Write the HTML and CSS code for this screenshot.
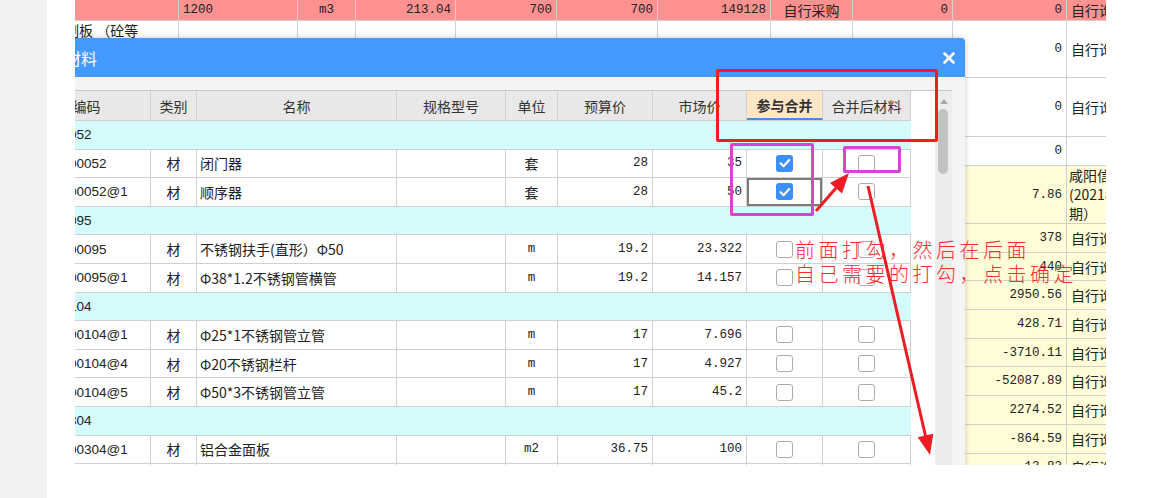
FILE: index.html
```html
<!DOCTYPE html>
<html lang="zh-CN">
<head>
    <meta charset="UTF-8">
    <meta name="viewport" content="width=device-width, initial-scale=1.0">
    <title>合并材料</title>
    <link rel="stylesheet" href="styles.css">
</head>
<body>
    <div class="side"></div>
    <div class="main">
        <div class="view">
            <!-- 底下的材料表 -->
            <div class="sheet">
                <div class="srow r1 pink">
                    <div></div>
                    <div class="mono">1200</div>
                    <div class="mid mono">m3</div>
                    <div class="num mono">213.04</div>
                    <div class="num mono">700</div>
                    <div class="num mono">700</div>
                    <div class="num mono">149128</div>
                    <div class="mid">自行采购</div>
                    <div class="num mono">0</div>
                    <div class="num mono">0</div>
                    <div>自行询价</div>
                </div>
                <div class="srow r2">
                    <div class="wrap">预制板 （砼等<br>级C30，石子<br>20mm）</div>
                    <div></div><div></div><div></div><div></div>
                    <div></div><div></div><div></div><div></div>
                    <div class="num mono">0</div>
                    <div>自行询价</div>
                </div>
                <div class="srow r3">
                    <div class="cover"></div>
                    <div class="num mono">0</div>
                    <div>自行询价</div>
                </div>
                <div class="srow r4">
                    <div class="cover"></div>
                    <div class="num mono">0</div>
                    <div></div>
                </div>
                <div class="srow r5 yel">
                    <div class="cover"></div>
                    <div class="num mono">7.86</div>
                    <div class="wrap">咸阳信息价<br>(2021年第<br>期）</div>
                </div>
                <div class="srow yel"><div class="cover"></div><div class="num mono">378</div><div>自行询价</div></div>
                <div class="srow yel"><div class="cover"></div><div class="num mono">440</div><div>自行询价</div></div>
                <div class="srow yel"><div class="cover"></div><div class="num mono">2950.56</div><div>自行询价</div></div>
                <div class="srow yel"><div class="cover"></div><div class="num mono">428.71</div><div>自行询价</div></div>
                <div class="srow yel"><div class="cover"></div><div class="num mono">-3710.11</div><div>自行询价</div></div>
                <div class="srow yel"><div class="cover"></div><div class="num mono">-52087.89</div><div>自行询价</div></div>
                <div class="srow yel"><div class="cover"></div><div class="num mono">2274.52</div><div>自行询价</div></div>
                <div class="srow yel"><div class="cover"></div><div class="num mono">-864.59</div><div>自行询价</div></div>
                <div class="srow yel"><div class="cover"></div><div class="num mono">13.83</div><div>自行询价</div></div>
            </div>

            <!-- 合并材料弹窗 -->
            <div class="dialog">
                <div class="dlg-title">
                    <span>合并材料</span>
                    <svg class="close" width="12" height="12" viewBox="0 0 12 12">
                        <path d="M1.5 1.5L10.5 10.5M10.5 1.5L1.5 10.5" stroke="#fff" stroke-width="2.6" stroke-linecap="round"/>
                    </svg>
                </div>
                <div class="dlg-body">
                    <div class="grid-box">
                        <div class="grid">
                            <div class="row head">
                                <div>编码</div><div>类别</div><div>名称</div><div>规格型号</div><div>单位</div>
                                <div>预算价</div><div>市场价</div><div class="on">参与合并</div><div>合并后材料</div>
                            </div>

                            <div class="row group"><div class="code">052</div></div>
                            <div class="row">
                                <div class="code">00052</div><div class="mid">材</div><div class="name">闭门器</div><div></div>
                                <div class="mid">套</div><div class="num mono">28</div><div class="num mono">35</div>
                                <div class="mid"><span class="ck on"><svg width="16" height="16" viewBox="0 0 16 16"><path d="M3.6 8.2l3 3 5.6-6.2" fill="none" stroke="#fff" stroke-width="2.2" stroke-linecap="round" stroke-linejoin="round"/></svg></span></div>
                                <div class="mid"><span class="ck"></span></div>
                            </div>
                            <div class="row">
                                <div class="code">00052@1</div><div class="mid">材</div><div class="name">顺序器</div><div></div>
                                <div class="mid">套</div><div class="num mono">28</div><div class="num mono">50</div>
                                <div class="mid focus"><span class="ck on"><svg width="16" height="16" viewBox="0 0 16 16"><path d="M3.6 8.2l3 3 5.6-6.2" fill="none" stroke="#fff" stroke-width="2.2" stroke-linecap="round" stroke-linejoin="round"/></svg></span></div>
                                <div class="mid"><span class="ck"></span></div>
                            </div>

                            <div class="row group"><div class="code">095</div></div>
                            <div class="row">
                                <div class="code">00095</div><div class="mid">材</div><div class="name">不锈钢扶手(直形）Φ50</div><div></div>
                                <div class="mid mono">m</div><div class="num mono">19.2</div><div class="num mono">23.322</div>
                                <div class="mid"><span class="ck"></span></div><div class="mid"><span class="ck"></span></div>
                            </div>
                            <div class="row">
                                <div class="code">00095@1</div><div class="mid">材</div><div class="name">Φ38*1.2不锈钢管横管</div><div></div>
                                <div class="mid mono">m</div><div class="num mono">19.2</div><div class="num mono">14.157</div>
                                <div class="mid"><span class="ck"></span></div><div class="mid"><span class="ck"></span></div>
                            </div>

                            <div class="row group"><div class="code">104</div></div>
                            <div class="row">
                                <div class="code">00104@1</div><div class="mid">材</div><div class="name">Φ25*1不锈钢管立管</div><div></div>
                                <div class="mid mono">m</div><div class="num mono">17</div><div class="num mono">7.696</div>
                                <div class="mid"><span class="ck"></span></div><div class="mid"><span class="ck"></span></div>
                            </div>
                            <div class="row">
                                <div class="code">00104@4</div><div class="mid">材</div><div class="name">Φ20不锈钢栏杆</div><div></div>
                                <div class="mid mono">m</div><div class="num mono">17</div><div class="num mono">4.927</div>
                                <div class="mid"><span class="ck"></span></div><div class="mid"><span class="ck"></span></div>
                            </div>
                            <div class="row">
                                <div class="code">00104@5</div><div class="mid">材</div><div class="name">Φ50*3不锈钢管立管</div><div></div>
                                <div class="mid mono">m</div><div class="num mono">17</div><div class="num mono">45.2</div>
                                <div class="mid"><span class="ck"></span></div><div class="mid"><span class="ck"></span></div>
                            </div>

                            <div class="row group"><div class="code">304</div></div>
                            <div class="row">
                                <div class="code">00304@1</div><div class="mid">材</div><div class="name">铝合金面板</div><div></div>
                                <div class="mid mono">m2</div><div class="num mono">36.75</div><div class="num mono">100</div>
                                <div class="mid"><span class="ck"></span></div><div class="mid"><span class="ck"></span></div>
                            </div>
                            <div class="row">
                                <div class="code">00304@2</div><div class="mid">材</div><div class="name">铝合金面板</div><div></div>
                                <div class="mid mono">m2</div><div class="num mono">36.75</div><div class="num mono">100</div>
                                <div class="mid"><span class="ck"></span></div><div class="mid"><span class="ck"></span></div>
                            </div>
                        </div>
                        <div class="pad"></div>
                        <div class="vscroll">
                            <div class="vs-up"></div>
                            <div class="vs-thumb"></div>
                        </div>
                    </div>
                </div>
            </div>

            <!-- 截图上的标注 -->
            <div class="mark mark-red"></div>
            <div class="mark mark-pink1"></div>
            <div class="mark mark-pink2"></div>
            <svg class="arrows" width="1031" height="465" viewBox="0 0 1031 465">
                <line x1="741" y1="211" x2="761" y2="188" stroke="#ee1c24" stroke-width="3"/>
                <polygon points="774,173 767,193.4 755,182.9" fill="#ee1c24"/>
                <line x1="793" y1="186" x2="850.5" y2="436" stroke="#ee1c24" stroke-width="3"/>
                <polygon points="855,455 858.3,433.7 842.7,437.3" fill="#ee1c24"/>
            </svg>
            <div class="note">前面打勾，然后在后面<br>自己需要的打勾，点击确定</div>
        </div>
    </div>
</body>
</html>
```

FILE: styles.css
```css
* {
    margin: 0;
    padding: 0;
    box-sizing: border-box;
}
body {
    display: flex;
    height: 498px;
    overflow: hidden;
    background: #fff;
    font-family: "Noto Sans CJK SC", "Liberation Sans", sans-serif;
    font-size: 14px;
    color: #222;
}
.side {
    width: 47px;
    background: #f1f2f4;
}
.main {
    padding-left: 28px;
}
.view {
    position: relative;
    width: 1031px;
    height: 465px;
    overflow: hidden;
}

/* 底表 */
.sheet {
    margin-left: -26px;
    width: 1131px;
}
.srow {
    display: grid;
    grid-template-columns: 130px 119px 58px 100px 101px 101px 113px 82px 100px 114px 113px;
    height: 28.7px;
    border-bottom: 1px solid #d0d0d0;
}
.srow > div {
    display: flex;
    align-items: center;
    padding: 0 4px;
    border-right: 1px solid #d0d0d0;
    white-space: nowrap;
    overflow: hidden;
}
.srow .wrap {
    line-height: 19px;
    padding-left: 2px;
    white-space: normal;
}
.srow .cover {
    grid-column: span 9;
}
.r1 { height: 21px; }
.r2 { height: 57px; }
.r3 { height: 59px; }
.r4 { height: 29px; }
.r5 { height: 58px; }
.pink { background: #ff9191; }
.yel { background: #fffdd7; }

.mono {
    font-family: "Liberation Mono", monospace;
    font-size: 12.5px;
}
.num { justify-content: flex-end; }
.mid { justify-content: center; }

/* 弹窗 */
.dialog {
    position: absolute;
    left: -52px;
    top: 38px;
    width: 942px;
    height: 440px;
    border-radius: 4px 4px 0 0;
    background: #f4f4f4;
    box-shadow: 0 0 6px rgba(0, 0, 0, 0.22);
}
.dlg-title {
    display: flex;
    align-items: center;
    justify-content: space-between;
    height: 39px;
    padding: 0 10px;
    border-radius: 4px 4px 0 0;
    background: #4499ff;
    color: #fff;
    font-size: 16px;
}
.dlg-body {
    padding: 13px 13px 0 0;
}
.grid-box {
    display: flex;
    height: 400px;
    border-top: 1px solid #c8c8c8;
    background: #fff;
}
.grid {
    width: 888px;
}
.row {
    display: grid;
    grid-template-columns: 128px 46px 200px 109px 52px 95px 94px 76px 88px;
    height: 28.6px;
    border-bottom: 1px solid #d0d0d0;
}
.row > div {
    display: flex;
    align-items: center;
    border-right: 1px solid #d0d0d0;
    padding: 0 4px;
    white-space: nowrap;
    overflow: hidden;
}
.row .code {
    padding-left: 46px;
    font-family: "Liberation Sans", sans-serif;
    font-size: 13.5px;
}
.row .name { padding-left: 3px; }
.head {
    height: 30px;
    background: #e8e8e8;
    color: #333;
}
.head > div { justify-content: center; }
.head .on {
    background: #ffe6c7;
    font-weight: bold;
    border-bottom: 2px solid #3c8ef0;
}
.group { background: #d4fcfc; }
.group > div {
    grid-column: 1 / -1;
    border-right: none;
}
.focus { box-shadow: inset 0 0 0 2px #7b7b7b; }

.ck {
    display: block;
    width: 17px;
    height: 17px;
    border: 1.5px solid #acacac;
    border-radius: 3px;
    background: #fff;
}
.ck.on {
    border: none;
    background: #3b8ff7;
}
.ck svg {
    display: block;
    margin: 0.5px;
}

.pad { width: 24px; }
.vscroll {
    width: 17px;
    background: #ececec;
}
.vs-up {
    width: 0;
    height: 0;
    margin: 8px auto 5px;
    border-left: 4px solid transparent;
    border-right: 4px solid transparent;
    border-bottom: 5px solid #a6a6a6;
}
.vs-thumb {
    width: 10px;
    height: 65px;
    margin-left: 3px;
    border-radius: 5px;
    background: #c2c2c2;
}

/* 标注 */
.mark {
    position: absolute;
    border-radius: 2px;
}
.mark-red {
    left: 641px;
    top: 69px;
    width: 222px;
    height: 73px;
    border: 3px solid #f51c1c;
}
.mark-pink1 {
    left: 655px;
    top: 143px;
    width: 84px;
    height: 73px;
    border: 3px solid #d844d2;
}
.mark-pink2 {
    left: 768px;
    top: 146px;
    width: 58px;
    height: 27px;
    border: 3px solid #d844d2;
}
.arrows {
    position: absolute;
    left: 0;
    top: 0;
}
.note {
    position: absolute;
    left: 720px;
    top: 238px;
    font-size: 20px;
    font-weight: 300;
    line-height: 24px;
    letter-spacing: 3.5px;
    color: #ff2b2b;
    white-space: nowrap;
}
```
